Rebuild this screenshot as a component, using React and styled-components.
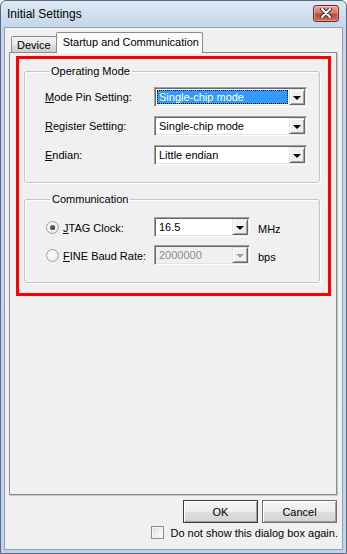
import React from 'react';
import styled, { createGlobalStyle } from 'styled-components';

const GlobalStyle = createGlobalStyle`
  html, body { margin: 0; padding: 0; background: #fff; }
  body {
    font-family: "Liberation Sans", Arial, sans-serif;
    font-size: 11px;
    color: #000;
  }
`;

const Window = styled.div`
  width: 347px;
  height: 554px;
  box-sizing: border-box;
  display: flex;
  flex-direction: column;
  border: 1px solid #5b6b7f;
  border-radius: 6px 6px 0 0;
  background: linear-gradient(#dde8f5, #c6d7ea 26px, #c0d3ea);
  padding: 0 3px 3px;
`;

const TitleBar = styled.div`
  height: 26px;
  display: flex;
  align-items: center;
  justify-content: space-between;
  padding: 0 4px 0 3px;
`;

const Title = styled.span`
  font-size: 12px;
  color: #000;
`;

const CloseButton = styled.div`
  width: 26px;
  height: 17px;
  box-sizing: border-box;
  margin-top: -2px;
  border: 1px solid #6b2a24;
  border-radius: 3px;
  background: linear-gradient(#e6a296, #d47a6c 45%, #c1493b 55%, #cf6a57);
  box-shadow: inset 0 0 0 1px rgba(255, 255, 255, 0.35);
  display: flex;
  align-items: center;
  justify-content: center;
`;

const Client = styled.div`
  flex: 1;
  display: flex;
  flex-direction: column;
  background: #f0f0f0;
  border: 1px solid #8ca0ba;
`;

const TabStrip = styled.div`
  display: flex;
  align-items: flex-end;
  height: 21px;
  margin-top: 4px;
  padding-left: 6px;
  position: relative;
  z-index: 1;
  margin-bottom: -1px;
`;

const Tab = styled.div`
  box-sizing: border-box;
  height: ${p => (p.$active ? 21 : 17)}px;
  padding: ${p => (p.$active ? '3px 3px 0 6px' : '2px 5px 0 5px')};
  border: 1px solid #898c95;
  border-bottom: ${p => (p.$active ? 'none' : '1px solid #898c95')};
  margin-left: ${p => (p.$active ? '-1px' : '0')};
  background: ${p => (p.$active ? '#fcfcfc' : 'linear-gradient(#f3f3f3, #ebebeb 50%, #dddddd 51%, #cfcfcf)')};
  border-radius: 2px 2px 0 0;
  white-space: nowrap;
`;

const Panel = styled.div`
  box-sizing: border-box;
  height: 443px;
  margin: 0 5px 0 4px;
  border: 1px solid #898c95;
  box-shadow: 1px 1px 0 #c8c8c8;
  background: #f0f0f0;
  padding: 3px 5px 0 6px;
`;

const Highlight = styled.div`
  border: 3px solid #ff0000;
  padding: 6px 8px 10px 5px;
  display: flex;
  flex-direction: column;
  gap: 10px;
`;

const Group = styled.fieldset`
  margin: 0;
  border: 1px solid #c5c5c5;
  border-radius: 3px;
  box-shadow: inset 1px 1px 0 #fff, 1px 1px 0 #fff;
  padding: ${p => p.$pad};
  display: flex;
  flex-direction: column;
  gap: ${p => p.$gap}px;
`;

const Legend = styled.legend`
  padding: 0 2px;
  margin-left: 4px;
  line-height: 13px;
`;

const Row = styled.div`
  display: flex;
  align-items: center;
  height: 20px;
`;

const Label = styled.span`
  width: ${p => p.$w}px;
  flex: none;
`;

const RadioLabel = styled.label`
  display: flex;
  align-items: center;
  gap: 4px;
  width: 108px;
  flex: none;
  margin-top: 1px;
`;

const Radio = styled.span`
  width: 13px;
  height: 13px;
  box-sizing: border-box;
  border-radius: 50%;
  border: 1px solid #a2a2a2;
  background: radial-gradient(circle at 40% 40%, #ffffff, #f0f0f0 55%, #d6d6d6);
  display: flex;
  align-items: center;
  justify-content: center;
  &::after {
    content: '';
    width: 5px;
    height: 5px;
    border-radius: 50%;
    background: ${p => (p.$checked ? 'radial-gradient(circle at 40% 40%, #6d6d6d, #1a1a1a)' : 'transparent')};
  }
`;

const Combo = styled.div`
  width: ${p => p.$w}px;
  height: 20px;
  box-sizing: border-box;
  flex: none;
  display: flex;
  border: 1px solid;
  border-color: #a0a0a0 #ffffff #ffffff #a0a0a0;
  box-shadow: inset 1px 1px 0 #696969, inset -1px -1px 0 #e3e3e3;
  background: ${p => (p.$disabled ? '#f0f0f0' : '#fff')};
  padding: 1px;
`;

const Field = styled.div`
  flex: 1;
  display: flex;
  align-items: center;
  margin: 1px;
  padding-left: 2px;
  font-size: 11px;
  color: ${p => (p.$disabled ? '#8d8d8d' : '#000')};
  background: ${p => (p.$selected ? '#3399ff' : 'transparent')};
  ${p => p.$selected && 'color: #fff; outline: 1px dotted #000; outline-offset: -1px;'}
`;

const DropButton = styled.div`
  width: 16px;
  flex: none;
  box-sizing: border-box;
  border: 1px solid;
  border-color: #e3e3e3 #696969 #696969 #e3e3e3;
  box-shadow: inset 1px 1px 0 #fff, inset -1px -1px 0 #a0a0a0;
  background: #f0f0f0;
  display: flex;
  align-items: center;
  justify-content: center;
  &::after {
    content: '';
    border-left: 4px solid transparent;
    border-right: 4px solid transparent;
    border-top: 4px solid ${p => (p.$disabled ? '#a0a0a0' : '#000')};
    margin-top: 1px;
  }
`;

const Unit = styled.span`
  margin-left: 8px;
  margin-top: 3px;
`;

const Footer = styled.div`
  display: flex;
  justify-content: flex-end;
  gap: 4px;
  margin: 5px 5px 0 0;
`;

const Button = styled.div`
  width: 75px;
  height: 23px;
  box-sizing: border-box;
  border: 1px solid ${p => (p.$default ? '#3c3c3c' : '#707070')};
  background: linear-gradient(#f4f4f4, #ececec 50%, #dedede 51%, #d3d3d3);
  box-shadow: inset 1px 1px 0 #fff, inset -1px -1px 0 #a0a0a0;
  display: flex;
  align-items: center;
  justify-content: center;
  font-size: 11px;
`;

const CheckRow = styled.label`
  display: flex;
  align-items: center;
  justify-content: flex-end;
  gap: 6px;
  margin: 3px 4px 0 0;
`;

const CheckBox = styled.span`
  width: 13px;
  height: 13px;
  box-sizing: border-box;
  border: 1px solid #8f8f8f;
  background: linear-gradient(135deg, #dcdcdc, #fff);
  box-shadow: inset 0 0 0 1px #f4f4f4;
`;

const U = styled.u`
  text-decoration-thickness: 1px;
  text-underline-offset: 1px;
`;

const CloseGlyph = () => (
  <svg width="12" height="10" viewBox="0 0 12 10">
    <path d="M2 1 L10 9 M10 1 L2 9" stroke="#3b2a2a" strokeWidth="4" strokeLinecap="round" />
    <path d="M2 1 L10 9 M10 1 L2 9" stroke="#ffffff" strokeWidth="2.2" strokeLinecap="round" />
  </svg>
);

export default function App() {
  return (
    <>
      <GlobalStyle />
      <Window>
        <TitleBar>
          <Title>Initial Settings</Title>
          <CloseButton>
            <CloseGlyph />
          </CloseButton>
        </TitleBar>
        <Client>
          <TabStrip>
            <Tab>Device</Tab>
            <Tab $active>Startup and Communication</Tab>
          </TabStrip>
          <Panel>
            <Highlight>
              <Group $pad="9px 0 17px 20px" $gap={9}>
                <Legend>Operating Mode</Legend>
                <Row>
                  <Label $w={109}><U>M</U>ode Pin Setting:</Label>
                  <Combo $w={153}>
                    <Field $selected>Single-chip mode</Field>
                    <DropButton />
                  </Combo>
                </Row>
                <Row>
                  <Label $w={109}><U>R</U>egister Setting:</Label>
                  <Combo $w={153}>
                    <Field>Single-chip mode</Field>
                    <DropButton />
                  </Combo>
                </Row>
                <Row>
                  <Label $w={109}><U>E</U>ndian:</Label>
                  <Combo $w={153}>
                    <Field>Little endian</Field>
                    <DropButton />
                  </Combo>
                </Row>
              </Group>
              <Group $pad="11px 0 17px 21px" $gap={8}>
                <Legend>Communication</Legend>
                <Row>
                  <RadioLabel>
                    <Radio $checked />
                    <span><U>J</U>TAG Clock:</span>
                  </RadioLabel>
                  <Combo $w={96}>
                    <Field>16.5</Field>
                    <DropButton />
                  </Combo>
                  <Unit>MHz</Unit>
                </Row>
                <Row>
                  <RadioLabel>
                    <Radio />
                    <span><U>F</U>INE Baud Rate:</span>
                  </RadioLabel>
                  <Combo $w={96} $disabled>
                    <Field $disabled>2000000</Field>
                    <DropButton $disabled />
                  </Combo>
                  <Unit>bps</Unit>
                </Row>
              </Group>
            </Highlight>
          </Panel>
          <Footer>
            <Button $default>OK</Button>
            <Button>Cancel</Button>
          </Footer>
          <CheckRow>
            <CheckBox />
            <span>Do not show this dialog box again.</span>
          </CheckRow>
        </Client>
      </Window>
    </>
  );
}
